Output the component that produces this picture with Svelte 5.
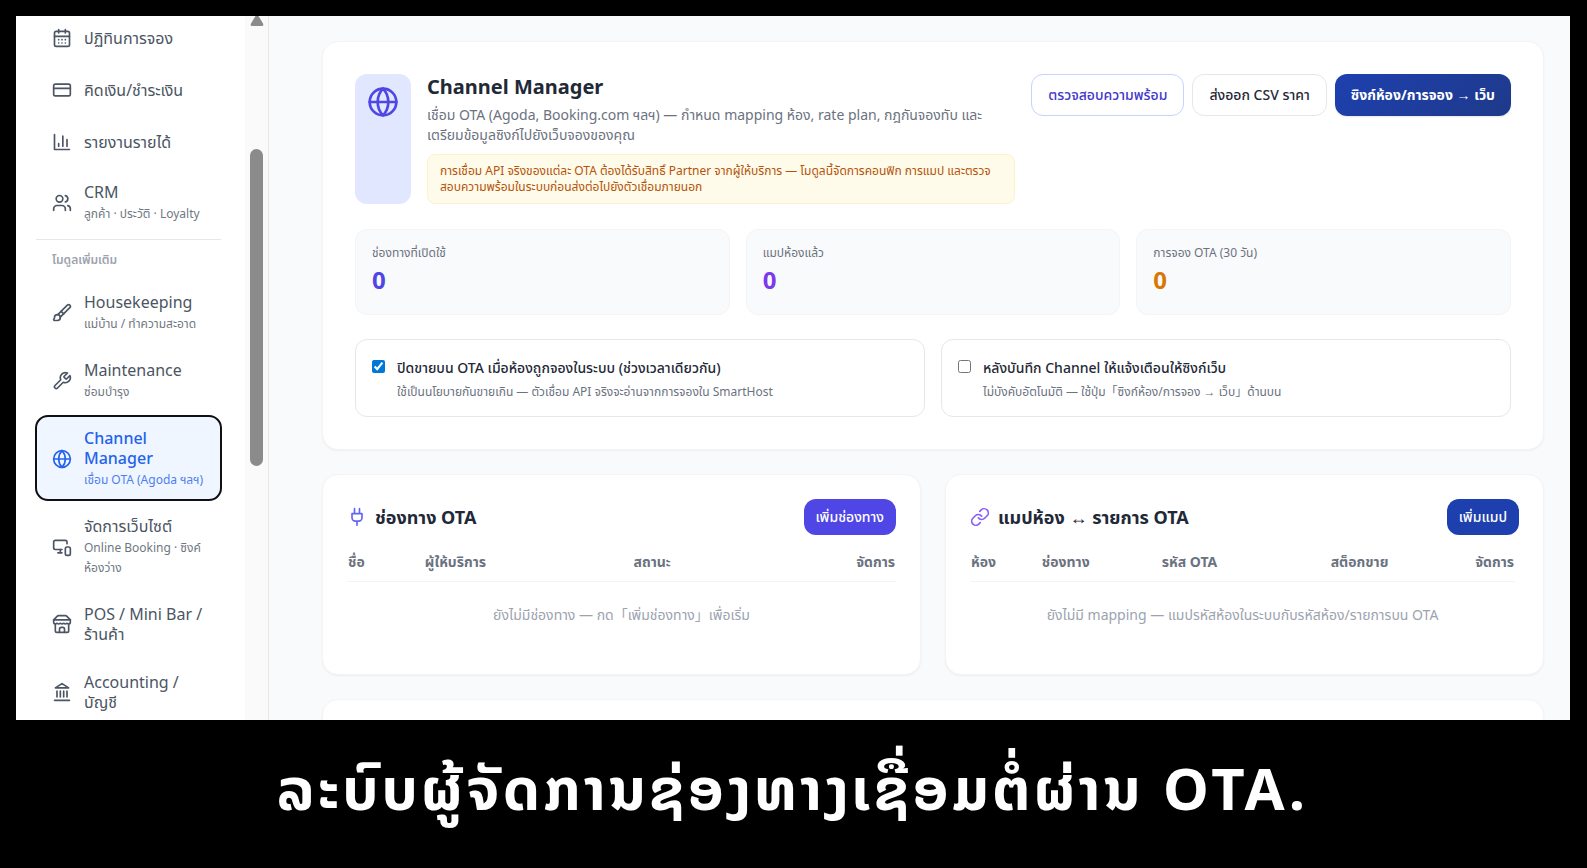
<script>
  const icons = {
    calendar: '<path d="M8 2v4M16 2v4"/><rect width="18" height="18" x="3" y="4" rx="2"/><path d="M3 10h18M8 14h.01M12 14h.01M16 14h.01M8 18h.01M12 18h.01M16 18h.01"/>',
    card: '<rect width="20" height="14" x="2" y="5" rx="2"/><path d="M2 10h20"/>',
    chart: '<path d="M3 3v18h18"/><path d="M18 17V9M13 17V5M8 17v-3"/>',
    users: '<path d="M16 21v-2a4 4 0 0 0-4-4H6a4 4 0 0 0-4 4v2"/><circle cx="9" cy="7" r="4"/><path d="M22 21v-2a4 4 0 0 0-3-3.87M16 3.13a4 4 0 0 1 0 7.75"/>',
    brush: '<path d="m11 10 3 3"/><path d="M6.5 21A3.5 3.5 0 1 0 3 17.5a2.62 2.62 0 0 1-.708 1.792A1 1 0 0 0 3 21z"/><path d="M9.969 17.031 21.378 5.624a1 1 0 0 0-3.002-3.002L6.967 14.031"/>',
    wrench: '<path d="M14.7 6.3a1 1 0 0 0 0 1.4l1.6 1.6a1 1 0 0 0 1.4 0l3.77-3.77a6 6 0 0 1-7.94 7.94l-6.91 6.91a2.12 2.12 0 0 1-3-3l6.91-6.91a6 6 0 0 1 7.94-7.94l-3.76 3.76z"/>',
    globe: '<circle cx="12" cy="12" r="10"/><path d="M12 2a14.5 14.5 0 0 0 0 20 14.5 14.5 0 0 0 0-20"/><path d="M2 12h20"/>',
    devices: '<path d="M18 8V6a2 2 0 0 0-2-2H4a2 2 0 0 0-2 2v7a2 2 0 0 0 2 2h8"/><path d="M10 19v-3.96 3.15M7 19h5"/><rect width="6" height="10" x="16" y="12" rx="2"/>',
    store: '<path d="m2 7 4.41-4.41A2 2 0 0 1 7.83 2h8.34a2 2 0 0 1 1.42.59L22 7"/><path d="M4 12v8a2 2 0 0 0 2 2h12a2 2 0 0 0 2-2v-8"/><path d="M15 22v-4a2 2 0 0 0-2-2h-2a2 2 0 0 0-2 2v4M2 7h20"/><path d="M22 7v3a2 2 0 0 1-2 2a2.7 2.7 0 0 1-1.59-.63.7.7 0 0 0-.82 0A2.7 2.7 0 0 1 16 12a2.7 2.7 0 0 1-1.59-.63.7.7 0 0 0-.82 0A2.7 2.7 0 0 1 12 12a2.7 2.7 0 0 1-1.59-.63.7.7 0 0 0-.82 0A2.7 2.7 0 0 1 8 12a2.7 2.7 0 0 1-1.59-.63.7.7 0 0 0-.82 0A2.7 2.7 0 0 1 4 12a2 2 0 0 1-2-2V7"/>',
    bank: '<path d="M3 22h18M6 18v-7M10 18v-7M14 18v-7M18 18v-7"/><path d="m12 2 8 5H4z"/>',
    plug: '<path d="M12 22v-5M9 8V2M15 8V2M18 8v5a4 4 0 0 1-4 4h-4a4 4 0 0 1-4-4V8Z"/>',
    link: '<path d="M10 13a5 5 0 0 0 7.54.54l3-3a5 5 0 0 0-7.07-7.07l-1.72 1.71"/><path d="M14 11a5 5 0 0 0-7.54-.54l-3 3a5 5 0 0 0 7.07 7.07l1.71-1.71"/>'
  };

  const primary = [
    { icon: 'calendar', title: 'ปฏิทินการจอง' },
    { icon: 'card', title: 'คิดเงิน/ชำระเงิน' },
    { icon: 'chart', title: 'รายงานรายได้' },
    { icon: 'users', title: 'CRM', sub: 'ลูกค้า · ประวัติ · Loyalty' }
  ];
  const modules = [
    { icon: 'brush', title: 'Housekeeping', sub: 'แม่บ้าน / ทำความสะอาด' },
    { icon: 'wrench', title: 'Maintenance', sub: 'ซ่อมบำรุง' },
    { icon: 'globe', title: 'Channel Manager', sub: 'เชื่อม OTA (Agoda ฯลฯ)', active: true },
    { icon: 'devices', title: 'จัดการเว็บไซต์', sub: 'Online Booking · ซิงค์ห้องว่าง' },
    { icon: 'store', title: 'POS / Mini Bar / ร้านค้า' },
    { icon: 'bank', title: 'Accounting / บัญชี' }
  ];
  const stats = [
    { label: 'ช่องทางที่เปิดใช้', value: 0, tone: 'indigo' },
    { label: 'แมปห้องแล้ว', value: 0, tone: 'violet' },
    { label: 'การจอง OTA (30 วัน)', value: 0, tone: 'amber' }
  ];
  let options = $state([
    { id: 'close-sale', checked: true, title: 'ปิดขายบน OTA เมื่อห้องถูกจองในระบบ (ช่วงเวลาเดียวกัน)', sub: 'ใช้เป็นนโยบายกันขายเกิน — ตัวเชื่อม API จริงจะอ่านจากการจองใน SmartHost' },
    { id: 'sync-hint', checked: false, title: 'หลังบันทึก Channel ให้แจ้งเตือนให้ซิงก์เว็บ', sub: 'ไม่บังคับอัตโนมัติ — ใช้ปุ่ม「ซิงก์ห้อง/การจอง → เว็บ」ด้านบน' }
  ]);
</script>

{#snippet icon(name)}
  <svg class="icon" viewBox="0 0 24 24" aria-hidden="true">{@html icons[name]}</svg>
{/snippet}

{#snippet arrowText(text)}
  {#each text.split(/([→↔])/) as part}{#if part === '→' || part === '↔'}<span class="sym">{part}</span>{:else}{part}{/if}{/each}
{/snippet}

{#snippet navItem(item)}
  <a class="item" class:active={item.active} class:has-sub={item.sub} href="#{item.icon}">
    {@render icon(item.icon)}
    <span class="item-text">
      <span class="item-title">{item.title}</span>
      {#if item.sub}<span class="item-sub">{item.sub}</span>{/if}
    </span>
  </a>
{/snippet}

<div class="stage">
  <div class="app">
    <aside>
      <nav>
        {#each primary as item}{@render navItem(item)}{/each}
        <h2 class="group">โมดูลเพิ่มเติม</h2>
        {#each modules as item}{@render navItem(item)}{/each}
      </nav>
      <div class="track">
        <svg class="arrow" viewBox="0 0 14 10" aria-hidden="true"><path d="M5.500 0H8.500L13 7.500Q14 10 12 10H2Q0 10 1 7.500Z" /></svg>
        <div class="thumb"></div>
      </div>
    </aside>

    <main>
      <section class="card hero">
        <header class="hero-head">
          <div class="badge">{@render icon('globe')}</div>
          <div class="intro">
            <h1>Channel Manager</h1>
            <p class="lead">เชื่อม OTA (Agoda, Booking.com ฯลฯ) — กำหนด mapping ห้อง, rate plan, กฎกันจองทับ และเตรียมข้อมูลซิงก์ไปยังเว็บจองของคุณ</p>
            <p class="notice">การเชื่อม API จริงของแต่ละ OTA ต้องได้รับสิทธิ์ Partner จากผู้ให้บริการ — โมดูลนี้จัดการคอนฟิก การแมป และตรวจสอบความพร้อมในระบบก่อนส่งต่อไปยังตัวเชื่อมภายนอก</p>
          </div>
          <div class="actions">
            <button class="btn check">ตรวจสอบความพร้อม</button>
            <button class="btn plain">ส่งออก CSV ราคา</button>
            <button class="btn sync">{@render arrowText('ซิงก์ห้อง/การจอง → เว็บ')}</button>
          </div>
        </header>

        <div class="stats">
          {#each stats as s}
            <div class="stat">
              <div class="stat-label">{s.label}</div>
              <div class="stat-value {s.tone}">{s.value}</div>
            </div>
          {/each}
        </div>

        <div class="options">
          {#each options as o}
            <label class="option" for={o.id}>
              <input type="checkbox" id={o.id} bind:checked={o.checked} />
              <span class="option-text">
                <span class="option-title">{o.title}</span>
                <span class="option-sub">{@render arrowText(o.sub)}</span>
              </span>
            </label>
          {/each}
        </div>
      </section>

      <div class="pair">
        <section class="card panel">
          <header class="panel-head">
            <span class="mark plug">{@render icon('plug')}</span>
            <h2>ช่องทาง OTA</h2>
            <button class="btn small indigo-bg">เพิ่มช่องทาง</button>
          </header>
          <table>
            <colgroup><col style="width: 14%" /><col style="width: 38%" /><col style="width: 24%" /><col /></colgroup>
            <thead><tr><th>ชื่อ</th><th>ผู้ให้บริการ</th><th>สถานะ</th><th class="end">จัดการ</th></tr></thead>
            <tbody><tr><td colspan="4">ยังไม่มีช่องทาง — กด「เพิ่มช่องทาง」เพื่อเริ่ม</td></tr></tbody>
          </table>
        </section>

        <section class="card panel">
          <header class="panel-head">
            <span class="mark link">{@render icon('link')}</span>
            <h2>{@render arrowText('แมปห้อง ↔ รายการ OTA')}</h2>
            <button class="btn small blue-bg">เพิ่มแมป</button>
          </header>
          <div class="table-wrap">
            <table>
              <colgroup><col style="width: 13%" /><col style="width: 22%" /><col style="width: 31%" /><col /><col /></colgroup>
              <thead><tr><th>ห้อง</th><th>ช่องทาง</th><th>รหัส OTA</th><th>สต็อกขาย</th><th class="end">จัดการ</th></tr></thead>
              <tbody><tr><td colspan="5">ยังไม่มี mapping — แมปรหัสห้องในระบบกับรหัสห้อง/รายการบน OTA</td></tr></tbody>
            </table>
          </div>
        </section>
      </div>

      <section class="card next"></section>
    </main>
  </div>

  <p class="caption" lang="lo">ລະບົບຜູ້ຈັດການຊ່ອງທາງເຊື່ອມຕໍ່ຜ່ານ OTA.</p>
</div>

<style>
  :global(body) {
    margin: 0;
    background: #000;
  }
  .stage,
  .stage * {
    box-sizing: border-box;
  }
  .stage {
    display: flex;
    flex-direction: column;
    height: 100vh;
    padding: 16px 17px 0 16px;
    background: #000;
    color: #1f2937;
    font-family: "Noto Sans", "Noto Sans Thai", "Noto Sans Lao", "Noto Sans CJK JP", sans-serif;
    font-size: 14px;
    line-height: 20px;
  }
  h1, h2, p {
    margin: 0;
  }
  button {
    font-family: inherit;
  }
  .sym {
    font-family: "Liberation Sans", sans-serif;
    font-weight: 400;
    line-height: 1;
  }
  .app {
    display: flex;
    flex: 1;
    min-height: 0;
    overflow: hidden;
    background: #f9fafb;
  }
  .icon {
    display: block;
    flex: none;
    width: 20px;
    height: 20px;
    fill: none;
    stroke: currentColor;
    stroke-width: 2;
    stroke-linecap: round;
    stroke-linejoin: round;
  }

  aside {
    display: flex;
    flex: none;
    width: 253px;
    overflow: hidden;
    background: #fff;
    border-right: 1px solid #e5e7eb;
  }
  nav {
    display: flex;
    flex: 1;
    flex-direction: column;
    gap: 4px;
    margin-top: -2px;
    padding: 0 24px 0 20px;
  }
  .item {
    display: flex;
    flex: none;
    align-items: center;
    gap: 12px;
    min-height: 48px;
    padding: 12px 16px;
    border-radius: 12px;
    color: #4b5563;
    text-decoration: none;
  }
  .item.has-sub {
    padding-bottom: 10px;
  }
  .item.active {
    background: #eff6ff;
    color: #2563eb;
    outline: 2px solid #101010;
    outline-offset: -1px;
  }
  .item-text {
    display: flex;
    flex-direction: column;
    gap: 2px;
    min-width: 0;
  }
  .item-title {
    font-size: 16px;
  }
  .item.active .item-title {
    font-weight: 500;
  }
  .item-sub {
    margin-right: -8px;
    font-size: 12px;
    opacity: 0.8;
  }
  .group {
    margin-top: 1px;
    padding: 12px 16px 8px;
    border-top: 1px solid #e5e7eb;
    color: #9ca3af;
    font-size: 12px;
    font-weight: 600;
    line-height: 16px;
  }
  .track {
    display: flex;
    flex: none;
    flex-direction: column;
    align-items: center;
    width: 23px;
    background: #fafafa;
  }
  .arrow {
    width: 14px;
    height: 10px;
    fill: #8b8b8b;
  }
  .thumb {
    width: 13px;
    height: 45%;
    margin-top: 123px;
    border-radius: 7px;
    background: #8b8b8b;
  }

  main {
    display: flex;
    flex: 1;
    flex-direction: column;
    gap: 24px;
    min-width: 0;
    padding: 25px 26px 0 53px;
  }
  .card {
    flex: none;
    background: #fff;
    border: 1px solid #f3f4f6;
    border-radius: 16px;
    box-shadow: 0 1px 2px rgba(0, 0, 0, 0.05);
  }
  .hero {
    display: flex;
    flex-direction: column;
    gap: 24px;
    padding: 32px;
  }
  .hero-head {
    display: flex;
    gap: 16px;
    margin-bottom: 1px;
  }
  .badge {
    flex: none;
    padding: 12px;
    border-radius: 12px;
    background: #e0e7ff;
    color: #4f46e5;
  }
  .badge .icon {
    width: 32px;
    height: 32px;
  }
  .intro {
    flex: 1;
    min-width: 0;
  }
  h1 {
    font-size: 20px;
    font-weight: 700;
    line-height: 26px;
  }
  .lead {
    margin-top: 5px;
    color: #6b7280;
  }
  .notice {
    margin-top: 9px;
    padding: 8px 12px;
    border: 1px solid #fef3c7;
    border-radius: 8px;
    background: #fffbeb;
    color: #b45309;
    font-size: 12px;
    line-height: 16px;
  }
  .actions {
    display: flex;
    flex: none;
    align-items: flex-start;
    gap: 8px;
  }
  .btn {
    padding: 10px 16px;
    border: 1px solid transparent;
    border-radius: 12px;
    background: #fff;
    color: #1f2937;
    font-size: 14px;
    font-weight: 500;
    line-height: 20px;
    white-space: nowrap;
  }
  .check {
    border-color: #c7d2fe;
    color: #4338ca;
  }
  .plain {
    border-color: #e5e7eb;
  }
  .sync {
    border: 0;
    padding: 11px 16px;
    background: linear-gradient(135deg, #1e40af, #1e3a8a);
    color: #fff;
    font-weight: 700;
    box-shadow: 0 1px 2px rgba(0, 0, 0, 0.1);
  }
  .small {
    margin-left: auto;
    padding: 8px 12px;
    border: 0;
    color: #fff;
  }
  .indigo-bg {
    background: #4f46e5;
  }
  .blue-bg {
    background: #1e40af;
  }

  .stats {
    display: grid;
    grid-template-columns: repeat(3, 1fr);
    gap: 16px;
  }
  .stat {
    padding: 15px 16px 18px;
    border: 1px solid #f3f4f6;
    border-radius: 12px;
    background: #f9fafb;
  }
  .stat-label {
    color: #6b7280;
    font-size: 12px;
    line-height: 16px;
  }
  .stat-value {
    margin-top: 3px;
    font-size: 24px;
    font-weight: 700;
    line-height: 32px;
  }
  .indigo { color: #4f46e5; }
  .violet { color: #7c3aed; }
  .amber { color: #d97706; }

  .options {
    display: grid;
    grid-template-columns: repeat(2, 1fr);
    gap: 16px;
  }
  .option {
    display: flex;
    align-items: flex-start;
    gap: 12px;
    padding: 16px;
    border: 1px solid #e5e7eb;
    border-radius: 12px;
  }
  .option input {
    width: 13px;
    height: 13px;
    margin: 4px 0 0;
    accent-color: #0078d7;
  }
  .option-text {
    display: flex;
    flex-direction: column;
    gap: 4px;
  }
  .option-title {
    font-weight: 500;
    line-height: 24px;
  }
  .option-sub {
    color: #6b7280;
    font-size: 12px;
    line-height: 16px;
  }

  .pair {
    display: grid;
    grid-template-columns: repeat(2, 1fr);
    gap: 24px;
  }
  .panel {
    padding: 24px;
  }
  .panel-head {
    display: flex;
    align-items: center;
    gap: 8px;
    margin-bottom: 17px;
  }
  .panel-head h2 {
    font-size: 18px;
    font-weight: 700;
    line-height: 28px;
  }
  .mark.plug { color: #6366f1; }
  .mark.link { color: #8b5cf6; }
  .table-wrap {
    padding-right: 4px;
  }
  table {
    width: 100%;
    border-collapse: collapse;
    table-layout: fixed;
  }
  th {
    padding: 0 1px 9px;
    border-bottom: 1px solid #f3f4f6;
    color: #6b7280;
    font-weight: 700;
    text-align: left;
  }
  th.end {
    text-align: right;
  }
  td {
    padding: 23px 0 25px;
    color: #9ca3af;
    text-align: center;
  }
  .next {
    height: 160px;
  }

  .caption {
    flex: none;
    padding: 28px 0 40px;
    color: #fff;
    font-size: 58px;
    font-weight: 700;
    letter-spacing: 4px;
    line-height: 80px;
    text-align: center;
    white-space: nowrap;
  }
</style>
